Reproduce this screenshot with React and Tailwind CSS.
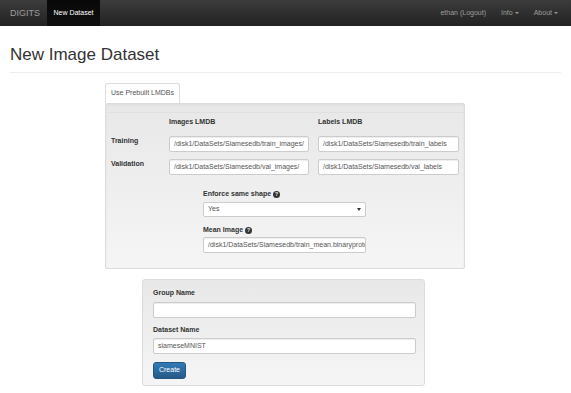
import React from "react";

// tiny bootstrap-ish form pieces
function Field({ value, className = "" }) {
  return (
    <div
      className={`flex items-center h-[16px] px-[4px] bg-white border border-[#cccccc] rounded-[2px] shadow-[inset_0_1px_1px_rgba(0,0,0,0.075)] text-[7px] text-[#555] whitespace-nowrap overflow-hidden ${className}`}
    >
      {value}
    </div>
  );
}

function Help() {
  return (
    <span className="inline-flex items-center justify-center w-[7px] h-[7px] ml-[2px] rounded-full bg-[#333] text-white text-[5px] font-bold leading-none align-middle">
      ?
    </span>
  );
}

function Caret() {
  return (
    <span className="inline-block ml-[2px] w-0 h-0 border-l-[2px] border-r-[2px] border-t-[2px] border-l-transparent border-r-transparent border-t-current align-middle" />
  );
}

export default function App() {
  return (
    <div className="w-[571px] h-[393px] bg-white overflow-hidden font-['Liberation_Sans',Arial,sans-serif] text-[#333]">
      {/* navbar */}
      <div className="flex items-center h-[26px] bg-gradient-to-b from-[#3c3c3c] to-[#222222] text-[#9d9d9d]">
        <span className="pl-[10px] pr-[7px] text-[9px] leading-none">DIGITS</span>
        <span className="flex items-center justify-center w-[53px] h-full bg-gradient-to-b from-[#080808] to-[#0f0f0f] text-white text-[7px]">
          New Dataset
        </span>
        <div className="ml-auto flex items-center gap-[15px] pr-[13px] text-[7px]">
          <span>ethan (Logout)</span>
          <span className="flex items-center">
            Info
            <Caret />
          </span>
          <span className="flex items-center">
            About
            <Caret />
          </span>
        </div>
      </div>

      <div className="px-[10px]">
        <div className="mt-[19px] pb-[7px] border-b border-[#eeeeee]">
          <h1 className="text-[17px] leading-[20px] text-[#333]">New Image Dataset</h1>
        </div>

        {/* tab + panel */}
        <div className="ml-[95px] mt-[10px] w-[360px]">
          <div className="flex items-center justify-center w-[75px] h-[20px] bg-white border border-b-0 border-[#dddddd] rounded-t-[3px] text-[7px] text-[#555]">
            Use Prebuilt LMDBs
          </div>
          <div className="border border-[#dcdcdc] rounded-[2px] bg-gradient-to-b from-[#e8e8e8] to-[#f5f5f5] shadow-[inset_0_1px_3px_rgba(0,0,0,0.05)] pl-[5px] pb-[15px]">
            <div className="mt-[8px] -ml-[5px] h-px bg-[#e0e0e0]" />
            <div className="grid grid-cols-[49px_140px_141px] gap-x-[9px]">
              <div className="h-[18px]" />
              <div className="h-[18px] flex items-center text-[7px] font-bold">Images LMDB</div>
              <div className="h-[18px] flex items-center text-[7px] font-bold">Labels LMDB</div>

              <div className="mt-[5px] text-[7px] leading-[10px] font-bold">Training</div>
              <Field className="mt-[5px]" value="/disk1/DataSets/Siamesedb/train_images/" />
              <Field className="mt-[5px]" value="/disk1/DataSets/Siamesedb/train_labels" />

              <div className="mt-[7px] text-[7px] leading-[10px] font-bold">Validation</div>
              <Field className="mt-[7px]" value="/disk1/DataSets/Siamesedb/val_images/" />
              <Field className="mt-[7px]" value="/disk1/DataSets/Siamesedb/val_labels" />
            </div>

            <div className="ml-[92px] w-[163px]">
              <div className="mt-[14px] flex items-center h-[10px] text-[7px] font-bold">
                Enforce same shape
                <Help />
              </div>
              <div className="mt-[3px] flex items-center justify-between h-[15px] px-[4px] bg-white border border-[#cccccc] rounded-[2px] text-[7px] text-[#555]">
                <span>Yes</span>
                <span className="w-0 h-0 border-l-[2px] border-r-[2px] border-t-[3px] border-l-transparent border-r-transparent border-t-[#333]" />
              </div>
              <div className="mt-[8px] flex items-center h-[10px] text-[7px] font-bold">
                Mean Image
                <Help />
              </div>
              <Field className="mt-[2px]" value="/disk1/DataSets/Siamesedb/train_mean.binaryproto" />
            </div>
          </div>
        </div>

        {/* name well */}
        <div className="ml-[132px] mt-[10px] w-[283px] border border-[#dcdcdc] rounded-[3px] bg-gradient-to-b from-[#e8e8e8] to-[#f5f5f5] pl-[10px] pt-[8px] pb-[6px]">
          <div className="h-[10px] flex items-center text-[7px] font-bold">Group Name</div>
          <Field className="mt-[4px] w-[263px]" value="" />
          <div className="mt-[7px] h-[10px] flex items-center text-[7px] font-bold">Dataset Name</div>
          <Field className="mt-[3px] w-[263px]" value="siameseMNIST" />
          <button className="mt-[8px] flex items-center justify-center w-[33px] h-[17px] rounded-[3px] border border-[#245580] bg-gradient-to-b from-[#337ab7] to-[#265a88] text-white text-[7px]">
            Create
          </button>
        </div>
      </div>
    </div>
  );
}
